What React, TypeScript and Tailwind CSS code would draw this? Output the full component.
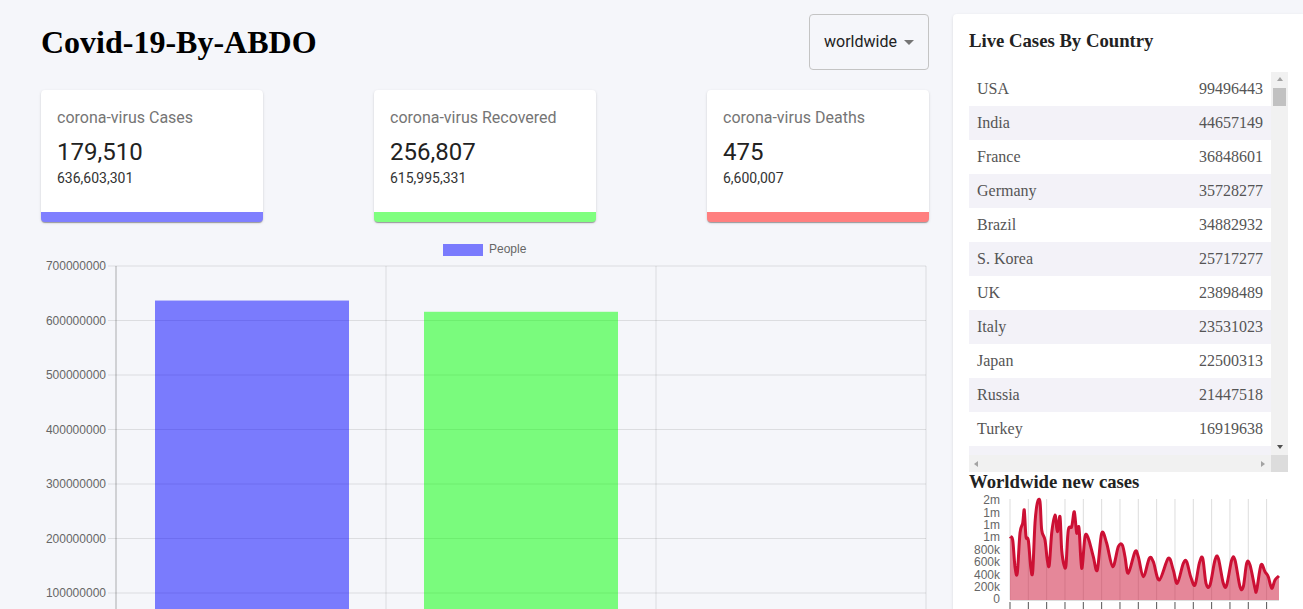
import React from "react";

const cards = [
  { title: "corona-virus Cases", today: "179,510", total: "636,603,301", border: "border-b-[#7f7fff]" },
  { title: "corona-virus Recovered", today: "256,807", total: "615,995,331", border: "border-b-[#7fff7f]" },
  { title: "corona-virus Deaths", today: "475", total: "6,600,007", border: "border-b-[#ff7f7f]" },
];

const countries = [
  ["USA", "99496443"],
  ["India", "44657149"],
  ["France", "36848601"],
  ["Germany", "35728277"],
  ["Brazil", "34882932"],
  ["S. Korea", "25717277"],
  ["UK", "23898489"],
  ["Italy", "23531023"],
  ["Japan", "22500313"],
  ["Russia", "21447518"],
  ["Turkey", "16919638"],
  ["Spain", "13595504"],
  ["Vietnam", "11521019"],
];

// sampled from the worldwide new cases curve
const casePoints: [number, number][] = [
  [41, 43.7], [43.7, 47], [46, 73.7], [48.3, 80], [51, 40], [53.7, 30], [55.3, 17], [57, 43.7],
  [59.3, 47], [61.7, 73.7], [63.7, 78.7], [66, 30], [68.3, 10], [71, 8.7], [72.7, 37], [76, 47],
  [78.3, 67], [80.3, 72], [82.7, 40], [86, 22], [88.3, 38.7], [91, 23.7], [92.7, 57], [95, 72],
  [97, 72], [99.3, 37], [102.7, 33.7], [105.3, 18.7], [107.7, 40], [110, 35], [112.7, 75.3],
  [116, 43.7], [119.3, 45.3], [124.3, 63.7], [128.3, 77], [132.7, 40.3], [137.7, 50.3],
  [143.7, 73.7], [149.3, 53.7], [153.3, 52], [156, 63.7], [159.3, 80.3], [166, 58.7],
  [169.3, 63.7], [174.3, 83.7], [180.3, 65.3], [184.3, 68.7], [190.3, 87], [199.3, 65.3],
  [204.3, 77], [208.3, 90.3], [214.3, 70.3], [217.7, 68.7], [221.7, 83.7], [226, 92],
  [230.3, 70.3], [233.7, 65.3], [237, 90.3], [241, 92], [246, 67], [249.3, 65.3], [254.3, 90.3],
  [257.7, 92], [262.7, 67], [266, 67], [271, 93.7], [274.3, 93.7], [277.7, 70.3], [281, 72],
  [286, 95.3], [287.7, 97], [292, 72], [296, 78.7], [299.3, 83.7], [302.7, 95.3], [306, 87],
  [310, 83],
];

const smoothPath = (pts: [number, number][]) => {
  let d = `M${pts[0][0]},${pts[0][1]}`;
  for (let i = 0; i < pts.length - 1; i++) {
    const p0 = pts[i - 1] || pts[i];
    const p1 = pts[i];
    const p2 = pts[i + 1];
    const p3 = pts[i + 2] || p2;
    const c1x = p1[0] + (p2[0] - p0[0]) / 6;
    const c1y = p1[1] + (p2[1] - p0[1]) / 6;
    const c2x = p2[0] - (p3[0] - p1[0]) / 6;
    const c2y = p2[1] - (p3[1] - p1[1]) / 6;
    d += ` C${c1x.toFixed(1)},${c1y.toFixed(1)} ${c2x.toFixed(1)},${c2y.toFixed(1)} ${p2[0]},${p2[1]}`;
  }
  return d;
};

const BarChart = () => {
  const ticks = [700000000, 600000000, 500000000, 400000000, 300000000, 200000000, 100000000, 0];
  const zeroY = 411.5;
  const step = 54.5;
  const bars = [
    { x: 114, value: 636603301, fill: "rgba(0,0,255,0.5)" },
    { x: 383, value: 615995331, fill: "rgba(0,255,0,0.5)" },
    { x: 653, value: 6600007, fill: "rgba(255,0,0,0.5)" },
  ];
  return (
    <svg width="888" height="430" className="mt-[14px] block" style={{ fontFamily: '"Liberation Sans", Arial, sans-serif' }}>
      <rect x="402" y="8" width="40" height="12" fill="rgba(0,0,255,0.5)" />
      <text x="448" y="17" fontSize="12" fill="#666">People</text>
      {ticks.map((t, i) => {
        const y = 30 + i * step;
        return (
          <g key={t}>
            <line x1="67" x2="885" y1={y} y2={y} stroke="rgba(0,0,0,0.1)" />
            <text x="65" y={y} dy="0.35em" fontSize="12" fill="#666" textAnchor="end">{t}</text>
          </g>
        );
      })}
      {[345, 615, 885].map((x) => (
        <line key={x} x1={x} x2={x} y1="30" y2={zeroY + 8} stroke="rgba(0,0,0,0.1)" />
      ))}
      <line x1="75" x2="75" y1="30" y2={zeroY + 8} stroke="rgba(0,0,0,0.3)" />
      {bars.map((b) => {
        const h = (b.value / 100000000) * step;
        return <rect key={b.x} x={b.x} y={zeroY - h} width="194" height={h} fill={b.fill} />;
      })}
    </svg>
  );
};

const LineChart = () => {
  const labels = ["2m", "1m", "1m", "1m", "800k", "600k", "400k", "200k", "0"];
  const grid = Array.from({ length: 15 }, (_, i) => 41 + i * 18.33);
  const line = smoothPath(casePoints);
  const area = `${line} L310,107 L41,107 Z`;
  return (
    <svg width="320" height="130" className="mt-px block" style={{ fontFamily: '"Liberation Sans", Arial, sans-serif' }}>
      {labels.map((l, i) => (
        <text key={i} x="31" y={7 + i * 12.4} dy="0.35em" fontSize="12" fill="#666" textAnchor="end">{l}</text>
      ))}
      {grid.map((x) => (
        <g key={x}>
          <line x1={x} x2={x} y1="6" y2="107" stroke="#ddd" />
          <line x1={x} x2={x} y1="109" y2="116" stroke="#555" />
        </g>
      ))}
      <line x1="41" x2="310" y1="107.5" y2="107.5" stroke="#ddd" />
      <path d={area} fill="rgba(204,16,52,0.5)" />
      <path d={line} fill="none" stroke="#CC1034" strokeWidth="3" strokeLinejoin="round" />
    </svg>
  );
};

const Arrow = ({ dir, color }: { dir: "up" | "down" | "left" | "right"; color: string }) => {
  const pts = {
    up: "1,5 4,1 7,5",
    down: "1,2 4,6 7,2",
    left: "5,1 1,4 5,7",
    right: "2,1 6,4 2,7",
  }[dir];
  return (
    <svg width="8" height="8" viewBox="0 0 8 8">
      <polygon points={pts} fill={color} />
    </svg>
  );
};

const App = () => {
  return (
    <div className="flex min-h-[609px] items-start bg-[#f5f6fa] pt-[14px] font-['Roboto',sans-serif]">
      <div className="w-[953px] shrink-0 pl-[41px] pr-[24px]">
        <div className="flex h-[56px] items-center justify-between">
          <h1 className="font-['Liberation_Serif',serif] text-[32px] font-bold leading-[40px] text-black">
            Covid-19-By-ABDO
          </h1>
          <div className="flex h-[56px] w-[120px] items-center justify-between rounded border border-[#c4c4c4] pl-[14px] pr-[7px]">
            <span className="text-base text-[#222]">worldwide</span>
            <svg width="24" height="24" viewBox="0 0 24 24">
              <path d="M7 10l5 5 5-5z" fill="#757575" />
            </svg>
          </div>
        </div>

        <div className="mt-5 flex justify-between">
          {cards.map((c) => (
            <div
              key={c.title}
              className={`w-[222px] overflow-hidden rounded border-b-[10px] bg-white shadow-[0px_2px_1px_-1px_rgba(0,0,0,0.2),0px_1px_1px_0px_rgba(0,0,0,0.14),0px_1px_3px_0px_rgba(0,0,0,0.12)] ${c.border}`}
            >
              <div className="px-4 pb-6 pt-4">
                <p className="mb-[5.6px] text-base leading-6 text-[#757575]">{c.title}</p>
                <p className="text-2xl leading-8 text-[#222]">{c.today}</p>
                <p className="text-sm leading-5 text-[#333]">{c.total}</p>
              </div>
            </div>
          ))}
        </div>

        <BarChart />
      </div>

      <div className="h-[620px] w-[350px] shrink-0 rounded-l bg-white pl-4 pr-[15px] pt-[15px] shadow-[0px_1px_3px_0px_rgba(0,0,0,0.12)]">
        <h3 className="font-['Liberation_Serif',serif] text-[18.72px] font-bold leading-6 text-[#222]">
          Live Cases By Country
        </h3>

        <div className="mt-[19px] flex w-[319px] flex-col font-['Liberation_Serif',serif]">
          <div className="flex h-[383px]">
            <div className="w-[302px] overflow-hidden">
              {countries.map(([name, cases], i) => (
                <div
                  key={name}
                  className={`flex h-[34px] items-center justify-between px-2 text-base text-[#555] ${i % 2 === 1 ? "bg-[#f3f2f8]" : "bg-white"}`}
                >
                  <span>{name}</span>
                  <span>{cases}</span>
                </div>
              ))}
            </div>
            <div className="flex w-[17px] flex-col items-center bg-[#f1f1f1]">
              <div className="flex h-4 items-center justify-center">
                <Arrow dir="up" color="#a3a3a3" />
              </div>
              <div className="h-[18px] w-[13px] bg-[#c1c1c1]" />
              <div className="flex-1" />
              <div className="flex h-[17px] items-center justify-center">
                <Arrow dir="down" color="#505050" />
              </div>
            </div>
          </div>
          <div className="flex h-[17px]">
            <div className="flex w-[302px] items-center justify-between bg-[#f1f1f1] px-1">
              <Arrow dir="left" color="#a3a3a3" />
              <Arrow dir="right" color="#a3a3a3" />
            </div>
            <div className="w-[17px] bg-[#dcdcdc]" />
          </div>
        </div>

        <h3 className="font-['Liberation_Serif',serif] text-[18.72px] font-bold leading-5 text-[#222]">
          Worldwide new cases
        </h3>
        <LineChart />
      </div>
    </div>
  );
};

export default App;
